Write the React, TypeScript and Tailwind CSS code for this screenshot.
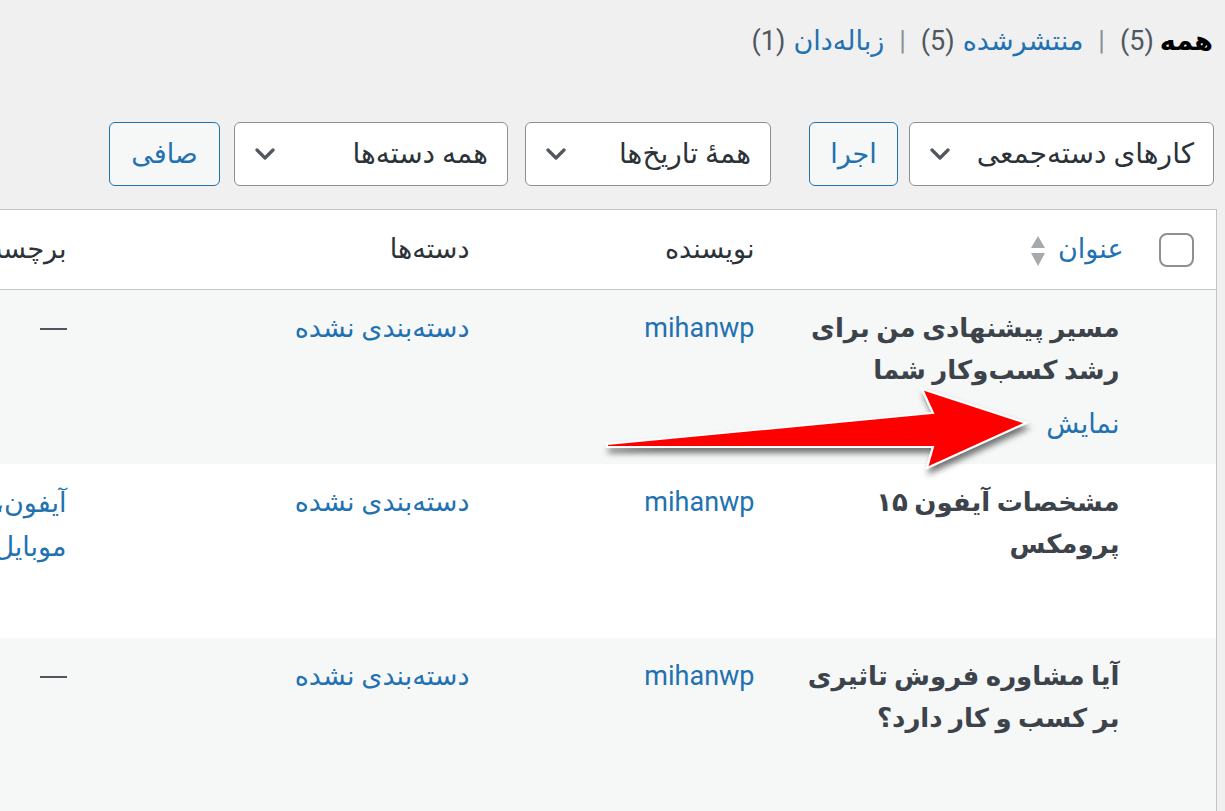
import type { ReactNode } from "react";

const FONT = { fontFamily: 'Roboto, "DejaVu Sans", sans-serif' };

function Chevron() {
  return (
    <svg width="20" height="12" viewBox="0 0 20 12" className="shrink-0">
      <polyline
        points="2,2 10,10 18,2"
        fill="none"
        stroke="#50575e"
        strokeWidth="3.2"
        strokeLinecap="round"
        strokeLinejoin="round"
      />
    </svg>
  );
}

function Select({ label, width }: { label: string; width: string }) {
  return (
    <div
      className={`${width} flex h-[64px] items-center justify-between rounded-[6px] border border-[#8c8f94] bg-white pl-[20px] pr-[19px] text-[28px] text-[#2c3338]`}
    >
      <span className="whitespace-nowrap">{label}</span>
      <Chevron />
    </div>
  );
}

function Button({ label, width }: { label: string; width: string }) {
  return (
    <button
      type="button"
      className={`${width} flex h-[64px] items-center justify-center rounded-[6px] border border-[#2271b1] bg-[#f6f7f7] text-[27px] text-[#2271b1]`}
    >
      {label}
    </button>
  );
}

function SortIcon() {
  return (
    <svg width="16" height="32" viewBox="0 0 16 32" className="mr-[12px] inline-block align-middle">
      <polygon points="8,1 15,13 1,13" fill="#a7aaad" />
      <polygon points="1,18 15,18 8,31" fill="#a7aaad" />
    </svg>
  );
}

function Dash() {
  return (
    <span className="inline-block h-[2px] w-[27px] translate-y-[-2px] bg-[#50575e] align-middle" />
  );
}

type Row = {
  title: string[];
  actions?: boolean;
  tags: ReactNode;
};

const rows: Row[] = [
  {
    title: ["مسیر پیشنهادی من برای", "رشد کسب‌وکار شما"],
    actions: true,
    tags: <Dash />,
  },
  {
    title: ["مشخصات آیفون ۱۵", "پرومکس"],
    tags: (
      <span className="whitespace-nowrap text-[#2271b1]">
        آیفون، گوشی
        <br />
        موبایل
      </span>
    ),
  },
  {
    title: ["آیا مشاوره فروش تاثیری", "بر کسب و کار دارد؟"],
    tags: <Dash />,
  },
];

export default function App() {
  return (
    <div
      dir="rtl"
      style={FONT}
      className="relative min-h-screen overflow-hidden bg-[#f0f0f1] pr-2 text-[27px] text-[#2c3338]"
    >
      {/* status filters */}
      <div className="flex items-center pr-1 pt-[21px] leading-[40px]">
        <span className="font-bold text-black">همه</span>
        <span className="mr-[6px] text-[#50575e]">(5)</span>
        <span className="mx-[15px] text-[#8c8f94]">|</span>
        <span className="text-[#2271b1]">منتشرشده</span>
        <span className="mr-[8px] text-[#50575e]">(5)</span>
        <span className="mx-[15px] text-[#8c8f94]">|</span>
        <span className="text-[#2271b1]">زباله‌دان</span>
        <span className="mr-[8px] text-[#50575e]">(1)</span>
      </div>

      {/* bulk actions and filters */}
      <div className="mt-[61px] flex items-center pr-[3px]">
        <Select label="کارهای دسته‌جمعی" width="w-[305px]" />
        <div className="mr-[11px]">
          <Button label="اجرا" width="w-[89px]" />
        </div>
        <div className="mr-[38px]">
          <Select label="همهٔ تاریخ‌ها" width="w-[246px]" />
        </div>
        <div className="mr-[17px]">
          <Select label="همه دسته‌ها" width="w-[274px]" />
        </div>
        <div className="mr-[14px]">
          <Button label="صافی" width="w-[111px]" />
        </div>
      </div>

      {/* posts table */}
      <table className="mt-[23px] w-[1430px] table-fixed border-collapse border border-[#c3c4c7]">
        <colgroup>
          <col className="w-[79px]" />
          <col className="w-[363px]" />
          <col className="w-[285px]" />
          <col className="w-[403px]" />
          <col className="w-[300px]" />
        </colgroup>
        <thead>
          <tr className="h-[80px] border-b border-[#c3c4c7] bg-white">
            <th className="align-middle">
              <div className="mx-auto h-[34px] w-[35px] rounded-[8px] border-2 border-[#8c8f94] bg-white" />
            </th>
            <th className="pr-[14px] text-right align-middle font-normal">
              <span className="text-[#2271b1]">عنوان</span>
              <SortIcon />
            </th>
            <th className="pr-[20px] text-right align-middle font-normal">نویسنده</th>
            <th className="pr-[20px] text-right align-middle font-normal">دسته‌ها</th>
            <th className="whitespace-nowrap pr-[20px] text-right align-middle font-normal">برچسب‌ها</th>
          </tr>
        </thead>
        <tbody>
          {rows.map((row, i) => (
            <tr key={i} className={i % 2 === 0 ? "bg-[#f6f7f7]" : "bg-white"}>
              <td />
              <td className="pb-[19px] pr-[18px] pt-[17px] align-top">
                <div className="text-[26px] font-bold leading-[42px] text-[#3c434a]">
                  {row.title.map((line) => (
                    <div key={line} className="whitespace-nowrap">
                      {line}
                    </div>
                  ))}
                </div>
                <div className={`mt-[12px] leading-[42px] text-[#2271b1] ${row.actions ? "" : "invisible"}`}>
                  نمایش
                </div>
              </td>
              <td className="pr-[20px] pt-[17px] align-top leading-[42px] text-[#2271b1]">mihanwp</td>
              <td className="pr-[20px] pt-[17px] align-top leading-[42px] text-[#2271b1]">دسته‌بندی نشده</td>
              <td className="pr-[20px] pt-[17px] align-top leading-[44px]">{row.tags}</td>
            </tr>
          ))}
        </tbody>
      </table>

      {/* annotation arrow */}
      <svg
        className="pointer-events-none absolute left-0 top-0"
        width="1225"
        height="811"
        viewBox="0 0 1225 811"
      >
        <defs>
          <filter id="arrowShadow" x="-10%" y="-30%" width="120%" height="180%">
            <feDropShadow dx="2" dy="5" stdDeviation="3" floodColor="#000" floodOpacity="0.55" />
          </filter>
        </defs>
        <polygon
          points="607,444 933,413 922,389 1026,423 927,468 933,447 607,447"
          fill="#ff0000"
          stroke="#ffffff"
          strokeWidth="2"
          strokeLinejoin="miter"
          filter="url(#arrowShadow)"
        />
      </svg>
    </div>
  );
}
